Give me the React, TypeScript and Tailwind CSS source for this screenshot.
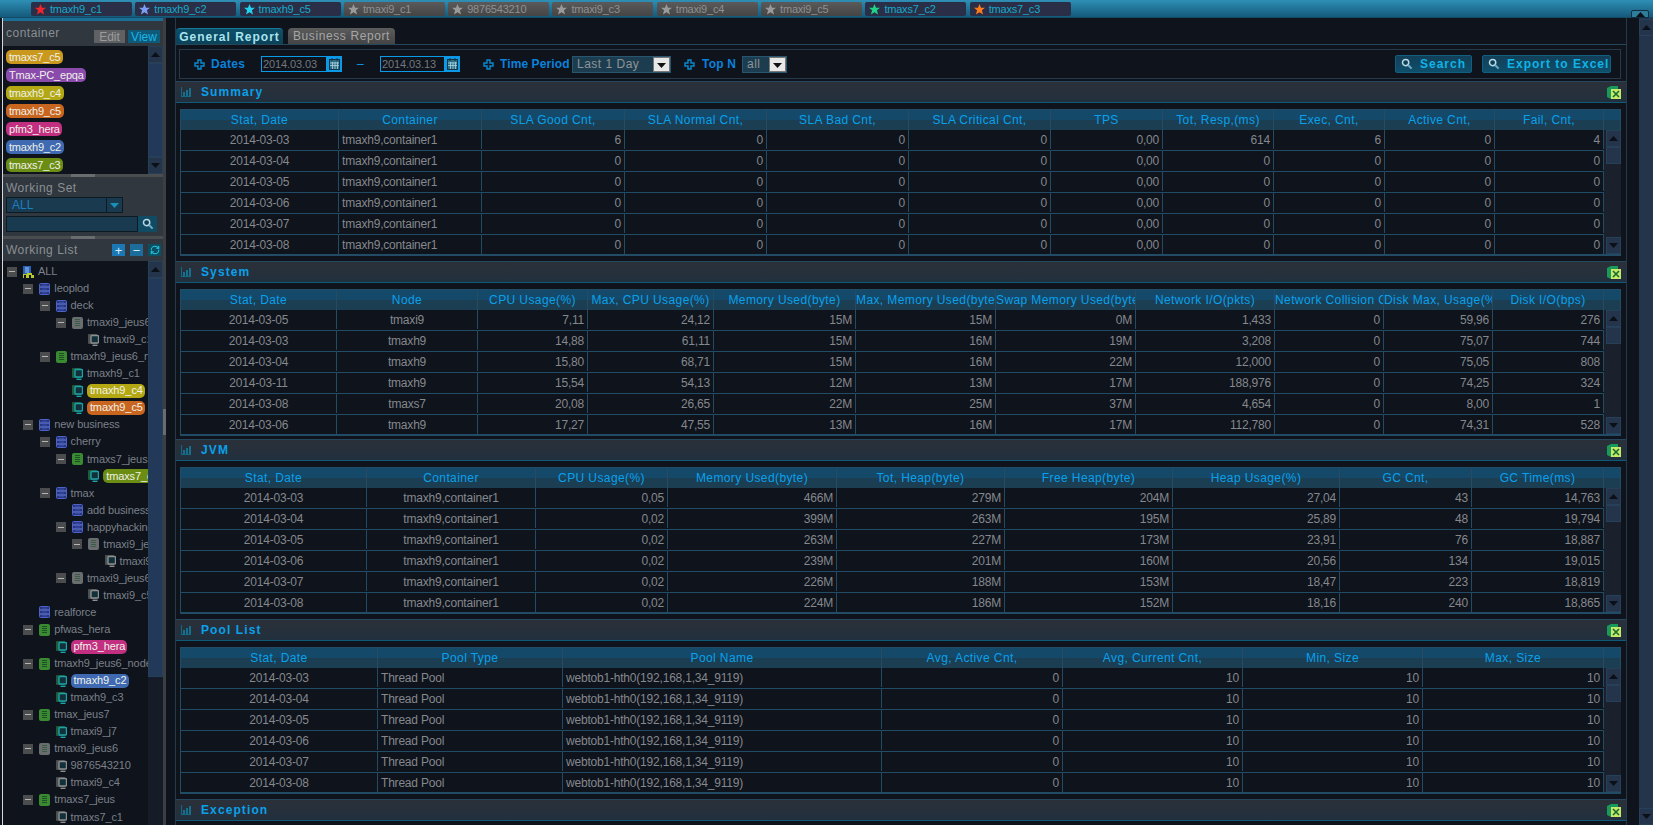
import type { ReactNode } from 'react'
import { RefreshCw } from 'lucide-react'

const font = "font-['Liberation_Sans',sans-serif]"

type TabItem = { label: string; star: string; on: boolean }

const tabs: TabItem[] = [
  { label: 'tmaxh9_c1', star: '#f0262c', on: true },
  { label: 'tmaxh9_c2', star: '#7f9cf5', on: true },
  { label: 'tmaxh9_c5', star: '#22d3ee', on: true },
  { label: 'tmaxi9_c1', star: '#9a9a9a', on: false },
  { label: '9876543210', star: '#9a9a9a', on: false },
  { label: 'tmaxi9_c3', star: '#9a9a9a', on: false },
  { label: 'tmaxi9_c4', star: '#9a9a9a', on: false },
  { label: 'tmaxi9_c5', star: '#9a9a9a', on: false },
  { label: 'tmaxs7_c2', star: '#1fd285', on: true },
  { label: 'tmaxs7_c3', star: '#ff7a1a', on: true },
]

const chips = [
  { label: 'tmaxs7_c5', cls: 'w-[57px] bg-[#c9981c]' },
  { label: 'Tmax-PC_epqa', cls: 'w-[80px] bg-[#8a4bad]' },
  { label: 'tmaxh9_c4', cls: 'w-[58px] bg-[#b3a813]' },
  { label: 'tmaxh9_c5', cls: 'w-[58px] bg-[#c8651f]' },
  { label: 'pfm3_hera', cls: 'w-[56px] bg-[#c22f80]' },
  { label: 'tmaxh9_c2', cls: 'w-[58px] bg-[#3f6ab2]' },
  { label: 'tmaxs7_c3', cls: 'w-[57px] bg-[#6c8d14]' },
]

type Kind = 'org' | 'biz' | 'green' | 'grey' | 'mon' | 'off'
type Node = { t: string; d: number; k: Kind; open?: boolean; chip?: string }

const tree: Node[] = [
  { t: 'ALL', d: 0, k: 'org', open: true },
  { t: 'leoplod', d: 1, k: 'biz', open: true },
  { t: 'deck', d: 2, k: 'biz', open: true },
  { t: 'tmaxi9_jeus6_node', d: 3, k: 'grey', open: true },
  { t: 'tmaxi9_c1', d: 4, k: 'off' },
  { t: 'tmaxh9_jeus6_node', d: 2, k: 'green', open: true },
  { t: 'tmaxh9_c1', d: 3, k: 'mon' },
  { t: 'tmaxh9_c4', d: 3, k: 'mon', chip: 'w-[58px] bg-[#b3a813]' },
  { t: 'tmaxh9_c5', d: 3, k: 'mon', chip: 'w-[58px] bg-[#c8651f]' },
  { t: 'new business', d: 1, k: 'biz', open: true },
  { t: 'cherry', d: 2, k: 'biz', open: true },
  { t: 'tmaxs7_jeus', d: 3, k: 'green', open: true },
  { t: 'tmaxs7_c3', d: 4, k: 'mon', chip: 'w-[58px] bg-[#6c8d14]' },
  { t: 'tmax', d: 2, k: 'biz', open: true },
  { t: 'add business', d: 3, k: 'biz' },
  { t: 'happyhacking', d: 3, k: 'biz', open: true },
  { t: 'tmaxi9_jeus6', d: 4, k: 'grey', open: true },
  { t: 'tmaxi9_c2', d: 5, k: 'off' },
  { t: 'tmaxi9_jeus6', d: 3, k: 'grey', open: true },
  { t: 'tmaxi9_c5', d: 4, k: 'off' },
  { t: 'realforce', d: 1, k: 'biz' },
  { t: 'pfwas_hera', d: 1, k: 'green', open: true },
  { t: 'pfm3_hera', d: 2, k: 'mon', chip: 'w-[56px] bg-[#c22f80]' },
  { t: 'tmaxh9_jeus6_node', d: 1, k: 'green', open: true },
  { t: 'tmaxh9_c2', d: 2, k: 'mon', chip: 'w-[58px] bg-[#3f6ab2]' },
  { t: 'tmaxh9_c3', d: 2, k: 'mon' },
  { t: 'tmax_jeus7', d: 1, k: 'green', open: true },
  { t: 'tmaxi9_j7', d: 2, k: 'mon' },
  { t: 'tmaxi9_jeus6', d: 1, k: 'grey', open: true },
  { t: '9876543210', d: 2, k: 'off' },
  { t: 'tmaxi9_c4', d: 2, k: 'off' },
  { t: 'tmaxs7_jeus', d: 1, k: 'green', open: true },
  { t: 'tmaxs7_c1', d: 2, k: 'off' },
]

type TableData = {
  widths: number[]
  heads: string[]
  left: number[]
  center: number[]
  rows: string[][]
}

const c1 = 'tmaxh9,container1'
const summary: TableData = {
  widths: [158, 143, 143, 142, 142, 142, 112, 111, 111, 110, 109],
  heads: ['Stat, Date', 'Container', 'SLA Good Cnt,', 'SLA Normal Cnt,', 'SLA Bad Cnt,', 'SLA Critical Cnt,', 'TPS', 'Tot, Resp,(ms)', 'Exec, Cnt,', 'Active Cnt,', 'Fail, Cnt,'],
  left: [1],
  center: [0],
  rows: [
    ['2014-03-03', c1, '6', '0', '0', '0', '0,00', '614', '6', '0', '4'],
    ['2014-03-04', c1, '0', '0', '0', '0', '0,00', '0', '0', '0', '0'],
    ['2014-03-05', c1, '0', '0', '0', '0', '0,00', '0', '0', '0', '0'],
    ['2014-03-06', c1, '0', '0', '0', '0', '0,00', '0', '0', '0', '0'],
    ['2014-03-07', c1, '0', '0', '0', '0', '0,00', '0', '0', '0', '0'],
    ['2014-03-08', c1, '0', '0', '0', '0', '0,00', '0', '0', '0', '0'],
  ],
}

const system: TableData = {
  widths: [156, 141, 110, 126, 142, 140, 140, 139, 109, 109, 111],
  heads: ['Stat, Date', 'Node', 'CPU Usage(%)', 'Max, CPU Usage(%)', 'Memory Used(byte)', 'Max, Memory Used(byte)', 'Swap Memory Used(byte)', 'Network I/O(pkts)', 'Network Collision Cnt,', 'Disk Max, Usage(%)', 'Disk I/O(bps)'],
  left: [],
  center: [0, 1],
  rows: [
    ['2014-03-05', 'tmaxi9', '7,11', '24,12', '15M', '15M', '0M', '1,433', '0', '59,96', '276'],
    ['2014-03-03', 'tmaxh9', '14,88', '61,11', '15M', '16M', '19M', '3,208', '0', '75,07', '744'],
    ['2014-03-04', 'tmaxh9', '15,80', '68,71', '15M', '16M', '22M', '12,000', '0', '75,05', '808'],
    ['2014-03-11', 'tmaxh9', '15,54', '54,13', '12M', '13M', '17M', '188,976', '0', '74,25', '324'],
    ['2014-03-08', 'tmaxs7', '20,08', '26,65', '22M', '25M', '37M', '4,654', '0', '8,00', '1'],
    ['2014-03-06', 'tmaxh9', '17,27', '47,55', '13M', '16M', '17M', '112,780', '0', '74,31', '528'],
  ],
}

const jvm: TableData = {
  widths: [186, 169, 132, 169, 168, 168, 167, 132, 132],
  heads: ['Stat, Date', 'Container', 'CPU Usage(%)', 'Memory Used(byte)', 'Tot, Heap(byte)', 'Free Heap(byte)', 'Heap Usage(%)', 'GC Cnt,', 'GC Time(ms)'],
  left: [],
  center: [0, 1],
  rows: [
    ['2014-03-03', c1, '0,05', '466M', '279M', '204M', '27,04', '43', '14,763'],
    ['2014-03-04', c1, '0,02', '399M', '263M', '195M', '25,89', '48', '19,794'],
    ['2014-03-05', c1, '0,02', '263M', '227M', '173M', '23,91', '76', '18,887'],
    ['2014-03-06', c1, '0,02', '239M', '201M', '160M', '20,56', '134', '19,015'],
    ['2014-03-07', c1, '0,02', '226M', '188M', '153M', '18,47', '223', '18,819'],
    ['2014-03-08', c1, '0,02', '224M', '186M', '152M', '18,16', '240', '18,865'],
  ],
}

const webtob = 'webtob1-hth0(192,168,1,34_9119)'
const pool: TableData = {
  widths: [197, 185, 319, 181, 180, 180, 181],
  heads: ['Stat, Date', 'Pool Type', 'Pool Name', 'Avg, Active Cnt,', 'Avg, Current Cnt,', 'Min, Size', 'Max, Size'],
  left: [1, 2],
  center: [0],
  rows: [
    ['2014-03-03', 'Thread Pool', webtob, '0', '10', '10', '10'],
    ['2014-03-04', 'Thread Pool', webtob, '0', '10', '10', '10'],
    ['2014-03-05', 'Thread Pool', webtob, '0', '10', '10', '10'],
    ['2014-03-06', 'Thread Pool', webtob, '0', '10', '10', '10'],
    ['2014-03-07', 'Thread Pool', webtob, '0', '10', '10', '10'],
    ['2014-03-08', 'Thread Pool', webtob, '0', '10', '10', '10'],
  ],
}

function Star({ color }: { color: string }) {
  return (
    <svg width="11" height="11" viewBox="0 0 10 10" className="shrink-0">
      <path d="M5 0 6.400 3.400H10L7.200 5.600 8.200 9.600 5 7.400 1.800 9.600 2.800 5.600 0 3.400H3.600Z" fill={color} />
    </svg>
  )
}

function Arrow({ up, color = '#0b1018' }: { up?: boolean; color?: string }) {
  return (
    <svg width="9" height="5" viewBox="0 0 9 5">
      <path d={up ? 'M4.5 0 9 5H0Z' : 'M0 0H9L4.500 5Z'} fill={color} />
    </svg>
  )
}

function ScrollBtn({ up }: { up?: boolean }) {
  return (
    <div className="flex h-[17px] w-[15px] shrink-0 items-center justify-center border border-[#27405a] bg-[#24344a]">
      <Arrow up={up} />
    </div>
  )
}

function PlusCircle() {
  return (
    <svg width="11" height="11" viewBox="0 0 11 11" className="shrink-0">
      <path d="M4 1h3v3h3v3H7v3H4V7H1V4h3Z" fill="none" stroke="#0a8ad0" strokeWidth="1.400" />
    </svg>
  )
}

function Calendar() {
  return (
    <div className="flex h-[16px] w-[15px] shrink-0 items-center justify-center bg-[#0a9ae8]">
      <svg width="11" height="12" viewBox="0 0 11 12">
        <rect x="0.500" y="1.500" width="10" height="10" fill="#2f6f86" stroke="#123447" />
        <path d="M3 0v3M8 0v3" stroke="#123447" />
        <path d="M1 5h9M1 7.500h9M3.500 4v7M6 4v7M8.500 4v7" stroke="#a9d4e2" strokeWidth="0.800" />
      </svg>
    </div>
  )
}

function Loupe({ size = 13 }: { size?: number }) {
  return (
    <svg width={size} height={size} viewBox="0 0 13 13" className="shrink-0">
      <circle cx="5" cy="5" r="3.400" fill="#0f3f55" stroke="#b9dbe8" strokeWidth="1.600" />
      <path d="M7.600 7.600 11.500 11.500" stroke="#6fa9c4" strokeWidth="2.200" />
    </svg>
  )
}

function ChartIcon() {
  return (
    <svg width="10" height="10" viewBox="0 0 10 10" className="shrink-0">
      <rect x="0" y="0" width="1" height="10" fill="#0f6a86" />
      <rect x="0" y="9" width="10" height="1" fill="#0f6a86" />
      <path d="M2 5h2v4H2ZM5 3h2v6H5ZM8 1h2v8H8Z" fill="#14708e" />
    </svg>
  )
}

function ExcelIcon() {
  return (
    <svg width="14" height="13" viewBox="0 0 14 13" className="shrink-0">
      <path d="M0 2 4 0H11V3H14V13H4L0 11Z" fill="#1a9a5a" />
      <rect x="4" y="3" width="10" height="10" fill="#c8e86a" />
      <path d="M6 5 12 11M12 5 6 11" stroke="#146b30" strokeWidth="1.600" />
    </svg>
  )
}

function TreeIcon({ kind }: { kind: Kind }) {
  if (kind === 'org') {
    return (
      <svg width="11" height="12" viewBox="0 0 11 12" className="shrink-0">
        <rect x="0" y="0" width="8" height="9" fill="#2a62b8" />
        <path d="M2 2h4M2 4h4M2 6h4" stroke="#9fc5f0" />
        <path d="M4 7h5v2h2v3H8V9H6v3H3V9H1v3H0V8h4Z" fill="#b8c92a" />
      </svg>
    )
  }
  if (kind === 'biz') {
    return (
      <svg width="11" height="12" viewBox="0 0 11 12" className="shrink-0">
        <rect x="0.500" y="0.500" width="10" height="11" rx="1" fill="#27357e" stroke="#4d62c8" />
        <path d="M1 4h9M1 8h9" stroke="#6f84e2" />
        <path d="M3 2.200h5M3 6h5M3 9.800h5" stroke="#3b4ea8" />
      </svg>
    )
  }
  if (kind === 'green' || kind === 'grey') {
    const fill = kind === 'green' ? '#3a8a32' : '#6a6d6e'
    const line = kind === 'green' ? '#1e4f24' : '#3c5a48'
    return (
      <svg width="11" height="12" viewBox="0 0 11 12" className="shrink-0">
        <rect x="0" y="0" width="11" height="12" rx="2" fill={fill} />
        <path d="M3 2.500h5M3 4.500h5M3 6.500h5M3 8.500h5" stroke={line} />
      </svg>
    )
  }
  const back = kind === 'mon' ? '#1f5a3a' : '#4c4f50'
  const front = kind === 'mon' ? '#1aa3a8' : '#8c8f90'
  return (
    <svg width="11" height="12" viewBox="0 0 11 12" className="shrink-0">
      <rect x="0" y="0" width="9" height="10" rx="1" fill={back} />
      <rect x="3" y="1.500" width="7.500" height="7.500" rx="1" fill="#12303a" stroke={front} strokeWidth="1.400" />
      <path d="M4.500 11.300h5" stroke={front} strokeWidth="1.400" />
    </svg>
  )
}

function TabBar() {
  return (
    <div className="relative flex h-[18px] shrink-0 gap-[3.3px] border-b border-[#134a66] bg-gradient-to-b from-[#2f8fb5] to-[#155a7c] pl-[31px] pt-[2px]">
      {tabs.map((tab) => (
        <div
          key={tab.label}
          className={`flex h-[14px] w-[101px] items-center gap-[4px] rounded-[2px] pl-[4px] text-[11px] tracking-[-0.2px] ${
            tab.on ? 'bg-[#2a2f47] text-[#17a9c9]' : 'bg-gradient-to-b from-[#5a5a5a] to-[#454545] text-[#8f9092]'
          }`}
        >
          <Star color={tab.star} />
          <span>{tab.label}</span>
        </div>
      ))}
      <div className="absolute left-[1631px] top-[10px] flex h-[8px] w-[18px] items-center justify-center rounded-t-[2px] border border-[#0f2f40] bg-[#2f7c9b]">
        <Arrow up />
      </div>
    </div>
  )
}

function HSplit() {
  return (
    <div className="flex h-[3px] shrink-0 justify-center bg-[#4a4d4f]">
      <div className="h-full w-[24px] bg-[#6a6d6f]" />
    </div>
  )
}

function Sidebar() {
  return (
    <aside className="ml-[2px] flex h-full w-[161px] shrink-0 flex-col border-l border-[#d8d8d8]">
      <div className="h-[3px] shrink-0 bg-[#1b6f97]" />
      <div className="flex h-[25px] shrink-0 items-start justify-between bg-[#30373e] pl-[3px] pr-[3px] pt-[6px]">
        <span className="tracking-[0.5px] text-[#8a8f94]">container</span>
        <div className="mt-[3px] flex gap-[3px]">
          <span className="flex h-[13px] w-[31px] items-center justify-center bg-[#5f6163] text-[#9a9c9e]">Edit</span>
          <span className="flex h-[13px] w-[32px] items-center justify-center bg-[#0f5a78] text-[#19b6ea]">View</span>
        </div>
      </div>
      <div className="flex h-[128px] shrink-0 bg-[#0e131c]">
        <div className="flex flex-1 flex-col gap-[4px] pl-[3px] pt-[4px]">
          {chips.map((chip) => (
            <div key={chip.label} className={`flex h-[14px] items-center whitespace-nowrap rounded-[5px] pl-[3px] text-[11px] tracking-[-0.2px] text-[#eef0e8] ${chip.cls}`}>
              {chip.label}
            </div>
          ))}
        </div>
        <div className="flex w-[15px] flex-col">
          <ScrollBtn up />
          <div className="flex-1 border border-[#27405a] bg-[#22395a]" />
          <ScrollBtn />
        </div>
      </div>
      <HSplit />
      <div className="flex h-[59px] shrink-0 flex-col bg-[#30373e] pl-[3px] pt-[5px]">
        <span className="h-[15px] tracking-[0.5px] text-[#8a8f94]">Working Set</span>
        <div className="flex h-[16px] w-[117px] items-center border border-[#0c1a24] bg-[#1a3a50] text-[#1a7fc0]">
          <span className="flex-1 pl-[5px]">ALL</span>
          <span className="flex h-full w-[16px] items-center justify-center border-l border-[#0c1a24]">
            <Arrow color="#1a90b8" />
          </span>
        </div>
        <div className="mt-[3px] flex h-[16px] w-[151px]">
          <div className="w-[132px] border border-[#0c1a24] bg-[#1a3a50]" />
          <div className="flex w-[19px] items-center justify-center bg-[#104a63]">
            <Loupe size={12} />
          </div>
        </div>
      </div>
      <HSplit />
      <div className="flex h-[22px] shrink-0 items-center justify-between bg-[#30373e] pl-[3px] pr-[2px]">
        <span className="tracking-[0.5px] text-[#8a8f94]">Working List</span>
        <div className="flex gap-[5px]">
          <span className="flex h-[12px] w-[13px] items-center justify-center bg-[#1c78b5] text-[13px] leading-none text-[#d5ecf8]">+</span>
          <span className="flex h-[12px] w-[13px] items-center justify-center bg-[#1c6c9c] text-[13px] leading-none text-[#d5ecf8]">−</span>
          <span className="flex h-[12px] w-[13px] items-center justify-center bg-[#0d4f62] text-[#27c3e0]">
            <RefreshCw size={10} strokeWidth={2.5} />
          </span>
        </div>
      </div>
      <div className="flex min-h-0 flex-1 bg-[#0e131c]">
        <div className="min-w-0 flex-1 overflow-hidden pt-[2px]">
          {tree.map((node, i) => (
            <TreeRow key={i} node={node} />
          ))}
        </div>
        <div className="flex w-[15px] flex-col">
          <ScrollBtn up />
          <div className="h-[399px] border border-[#27405a] bg-[#22395a]" />
          <div className="flex-1 bg-[#151c28]" />
        </div>
      </div>
    </aside>
  )
}

function TreeRow({ node }: { node: Node }) {
  return (
    <div className="flex h-[17.06px] items-center whitespace-nowrap text-[11px] tracking-[-0.1px]" style={{ paddingLeft: 4 + node.d * 16.3 }}>
      <div className="flex w-[16px] shrink-0">
        {node.open && (
          <div className="flex h-[10px] w-[10px] items-center justify-center bg-[#4b4c4d]">
            <div className="h-px w-[6px] bg-[#b5b5b5]" />
          </div>
        )}
      </div>
      <TreeIcon kind={node.k} />
      {node.chip ? (
        <span className={`ml-[4px] flex h-[14px] shrink-0 items-center rounded-[5px] pl-[3px] text-[#f0f2e8] ${node.chip}`}>{node.t}</span>
      ) : (
        <span className="ml-[4px] text-[#7c8088]">{node.t}</span>
      )}
    </div>
  )
}

function DataTable({ data }: { data: TableData }) {
  return (
    <div className="ml-[4px] flex h-[147px] w-[1441px] flex-col border border-[#224b66] border-b-2">
      <div className="flex h-[20px] shrink-0 bg-[linear-gradient(#15496a_0,#15496a_50%,#1b3e52_50%,#1b3e52_100%)] text-[#0aa0ea]">
        {data.heads.map((head, i) => (
          <div
            key={head}
            className="h-full overflow-hidden whitespace-nowrap border-r border-[#2a4a60] text-center leading-[20px] tracking-[0.4px]"
            style={{ width: data.widths[i] }}
          >
            {head}
          </div>
        ))}
      </div>
      <div className="flex min-h-0 flex-1">
        <div className="flex-1">
          {data.rows.map((row, r) => (
            <div key={r} className="flex h-[21px] border-b border-[#224b66] pb-[1px] tracking-[-0.2px] text-[#85888c] last:h-[20px] last:border-b-0">
              {row.map((cell, i) => (
                <div
                  key={i}
                  className={`flex items-center overflow-hidden whitespace-nowrap border-r border-[#224b66] px-[3px] ${
                    data.center.includes(i) ? 'justify-center' : data.left.includes(i) ? 'justify-start' : 'justify-end'
                  }`}
                  style={{ width: data.widths[i] }}
                >
                  {cell}
                </div>
              ))}
            </div>
          ))}
        </div>
        <div className="flex w-[17px] shrink-0 flex-col bg-[#1a212d] pl-[2px]">
          <ScrollBtn up />
          <div className="h-[17px] border border-[#27405a] bg-[#24344a]" />
          <div className="flex-1" />
          <ScrollBtn />
        </div>
      </div>
    </div>
  )
}

function Section({ title, data, cls }: { title: string; data?: TableData; cls?: string }) {
  return (
    <section className={cls}>
      <div className="flex h-[22px] items-center border-y border-[#25465c] border-b-[#0f5a78] bg-gradient-to-b from-[#2b3039] to-[#21303e] pl-[5px] pr-[5px]">
        <ChartIcon />
        <span className="ml-[10px] flex-1 text-[12px] font-bold tracking-[1.1px] text-[#0aa0ea]">{title}</span>
        <ExcelIcon />
      </div>
      {data && (
        <div className="pt-[6px]">
          <DataTable data={data} />
        </div>
      )}
    </section>
  )
}

function Field({ children, cls }: { children: ReactNode; cls: string }) {
  return <div className={`flex h-[16px] items-center border-[1.5px] border-[#0a9ae8] pl-[1px] text-[11px] tracking-[-0.1px] text-[#74787c] ${cls}`}>{children}</div>
}

function Combo({ value, cls }: { value: string; cls: string }) {
  return (
    <div className={`flex h-[17px] items-center justify-between border border-[#28566e] bg-[#1c3d50] pl-[4px] tracking-[0.5px] text-[#8f9397] ${cls}`}>
      <span>{value}</span>
      <span className="flex h-[15px] w-[17px] items-center justify-center border border-[#777] bg-[#e8e8e8]">
        <svg width="9" height="5" viewBox="0 0 9 5" className="mt-[3px]">
          <path d="M0 0H9L4.500 5Z" fill="#111" />
        </svg>
      </span>
    </div>
  )
}

function ActionBtn({ label, cls }: { label: string; cls: string }) {
  return (
    <div className={`flex h-[18px] items-center rounded-[2px] border border-[#0f5f80] bg-gradient-to-b from-[#123f58] to-[#0e4f6c] pl-[5px] font-bold tracking-[1px] text-[#0fb4e6] ${cls}`}>
      <Loupe size={12} />
      <span className="ml-[7px]">{label}</span>
    </div>
  )
}

function FilterBar() {
  return (
    <div className="border-t border-[#25465c] pl-[3px] pr-[5px] pt-[4px]">
      <div className="flex h-[30px] w-[1442px] items-center border border-[#25394a] pl-[14px] pr-[9px]">
        <PlusCircle />
        <span className="ml-[6px] w-[50px] font-bold tracking-[0.3px] text-[#0a82dc]">Dates</span>
        <Field cls="w-[66px]">2014.03.03</Field>
        <Calendar />
        <span className="ml-[15px] w-[23px] text-[#0a9ae8]">–</span>
        <Field cls="w-[65px]">2014.03.13</Field>
        <Calendar />
        <span className="ml-[23px]">
          <PlusCircle />
        </span>
        <span className="ml-[6px] w-[72px] whitespace-nowrap font-bold tracking-[0.1px] text-[#0a82dc]">Time Period</span>
        <Combo value="Last 1 Day" cls="w-[99px]" />
        <span className="ml-[13px]">
          <PlusCircle />
        </span>
        <span className="ml-[7px] w-[40px] font-bold tracking-[0.2px] text-[#0a82dc]">Top N</span>
        <Combo value="all" cls="w-[45px]" />
        <div className="ml-auto flex gap-[10px]">
          <ActionBtn label="Search" cls="w-[77px]" />
          <ActionBtn label="Export to Excel" cls="w-[129px] whitespace-nowrap" />
        </div>
      </div>
    </div>
  )
}

function Main() {
  return (
    <main className="ml-[9px] flex h-full w-[1452px] shrink-0 flex-col border-x border-[#25394a]">
      <div className="mt-[10px] flex h-[16px] shrink-0 gap-[5px]">
        <div className="flex w-[107px] items-center justify-center rounded-t-[4px] border-t border-[#157a9c] bg-gradient-to-b from-[#0d4f68] to-[#0b4258] font-bold tracking-[1px] text-[#a8e4f0]">
          General Report
        </div>
        <div className="flex w-[107px] items-center justify-center rounded-t-[4px] bg-gradient-to-b from-[#5c5c5c] to-[#444] tracking-[0.6px] text-[#a4a6a8]">
          Business Report
        </div>
      </div>
      <FilterBar />
      <Section title="Summary" data={summary} cls="mt-[2px] h-[180px] shrink-0" />
      <Section title="System" data={system} cls="h-[178px] shrink-0" />
      <Section title="JVM" data={jvm} cls="h-[180px] shrink-0" />
      <Section title="Pool List" data={pool} cls="h-[180px] shrink-0" />
      <Section title="Exception" />
    </main>
  )
}

export default function App() {
  return (
    <div className={`flex h-[825px] w-[1653px] flex-col overflow-hidden bg-[#0e131c] text-[12px] leading-none ${font}`}>
      <TabBar />
      <div className="flex min-h-0 flex-1">
        <Sidebar />
        <div className="flex h-full w-[3px] shrink-0 items-center bg-[#3b3f43]">
          <div className="h-[26px] w-full bg-[#6a6d6f]" />
        </div>
        <Main />
        <div className="ml-[12px] flex h-full w-[14px] shrink-0 flex-col bg-[#24344a] pt-[1px]">
          <ScrollBtn up />
          <div className="flex-1" />
          <ScrollBtn />
        </div>
      </div>
    </div>
  )
}
